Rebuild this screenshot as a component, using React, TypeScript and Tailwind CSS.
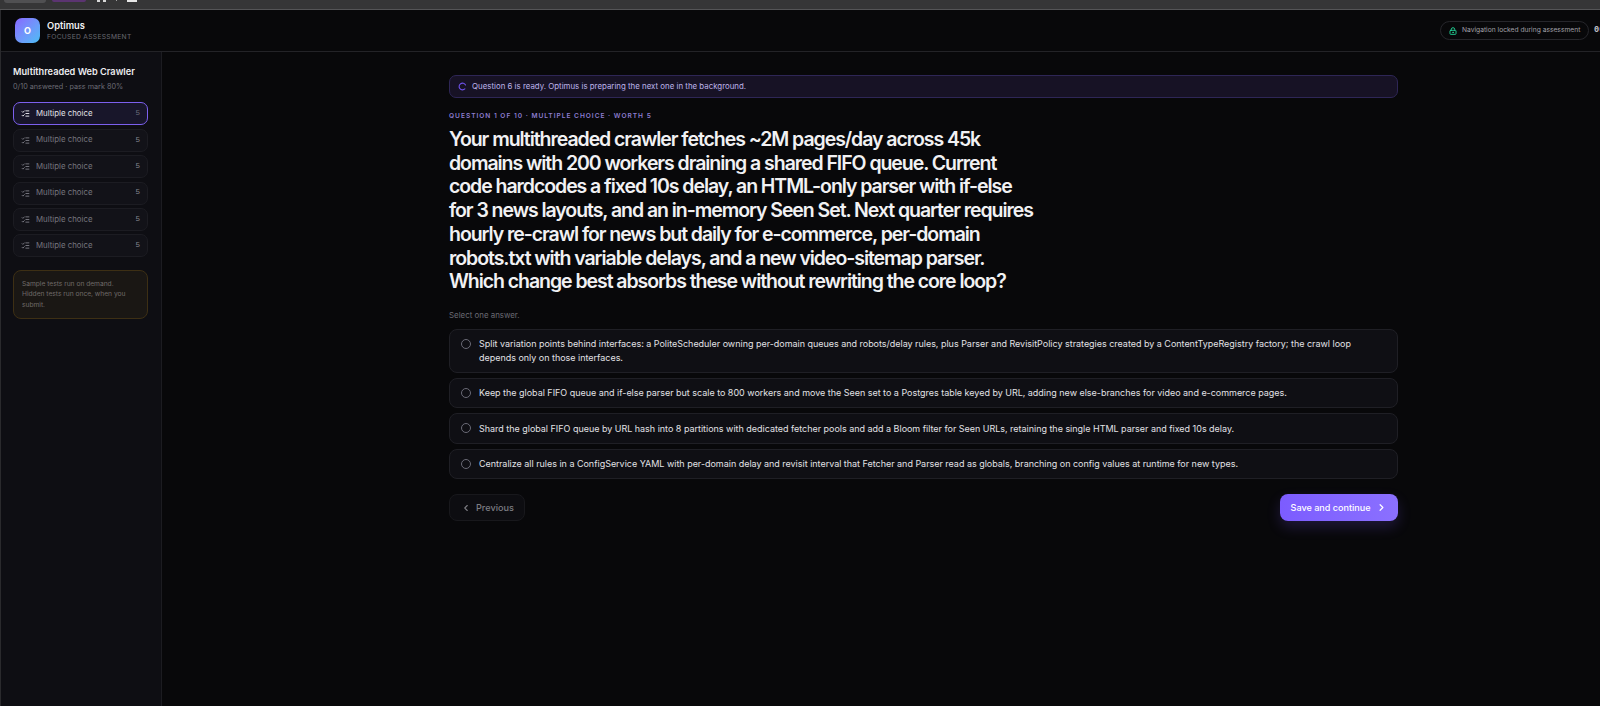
import { ChevronLeft, ChevronRight, ListChecks, LoaderCircle, LockKeyhole } from "lucide-react";

const questions = Array.from({ length: 6 }, (_, i) => ({ id: i + 1, label: "Multiple choice", points: 5 }));

const answers = [
  "Split variation points behind interfaces: a PoliteScheduler owning per-domain queues and robots/delay rules, plus Parser and RevisitPolicy strategies created by a ContentTypeRegistry factory; the crawl loop depends only on those interfaces.",
  "Keep the global FIFO queue and if-else parser but scale to 800 workers and move the Seen set to a Postgres table keyed by URL, adding new else-branches for video and e-commerce pages.",
  "Shard the global FIFO queue by URL hash into 8 partitions with dedicated fetcher pools and add a Bloom filter for Seen URLs, retaining the single HTML parser and fixed 10s delay.",
  "Centralize all rules in a ConfigService YAML with per-domain delay and revisit interval that Fetcher and Parser read as globals, branching on config values at runtime for new types.",
];

const promptLines = [
  "Your multithreaded crawler fetches ~2M pages/day across 45k",
  "domains with 200 workers draining a shared FIFO queue. Current",
  "code hardcodes a fixed 10s delay, an HTML-only parser with if-else",
  "for 3 news layouts, and an in-memory Seen Set. Next quarter requires",
  "hourly re-crawl for news but daily for e-commerce, per-domain",
  "robots.txt with variable delays, and a new video-sitemap parser.",
  "Which change best absorbs these without rewriting the core loop?",
];

function BrowserEdge() {
  return (
    <div className="flex h-[10px] shrink-0 items-start overflow-hidden border-b border-[#555557] bg-[#363637]">
      <span className="ml-1 h-[3px] w-[42px] rounded-b bg-[#505052]" />
      <span className="ml-[6px] h-[2px] w-[34px] rounded-b bg-[#5b3471]" />
      <span className="ml-[11px] h-[2px] w-[3px] bg-[#d8d8d8]" />
      <span className="ml-[3px] h-[2px] w-[3px] bg-[#d8d8d8]" />
      <span className="ml-[10px] h-px w-px bg-[#a0a0a0]" />
      <span className="ml-[10px] h-[2px] w-[10px] bg-[#e6e6e6]" />
    </div>
  );
}

function Header() {
  return (
    <header className="flex h-[42px] shrink-0 items-center border-b border-[#232327] pl-[14px]">
      <span className="flex size-[25px] items-center justify-center rounded-[7px] bg-linear-to-br from-[#8566ff] to-[#45bdf5] text-[9px] font-bold text-white">
        O
      </span>
      <div className="ml-[7px]">
        <p className="text-[9.3px] leading-[12px] font-semibold text-[#f0f0f2]">Optimus</p>
        <p className="text-[6.7px] leading-[10px] tracking-[0.3px] text-[#686871]">FOCUSED ASSESSMENT</p>
      </div>
      <div className="ml-auto flex w-[160px] shrink-0 items-center overflow-hidden">
        <span className="flex h-[19px] w-[149px] shrink-0 items-center rounded-full border border-[#26262b] pl-[8px] text-[6.7px] whitespace-nowrap text-[#a0a0a8]">
          <LockKeyhole size={8} strokeWidth={2.8} className="mr-[5px] shrink-0 text-[#24d095]" />
          Navigation locked during assessment
        </span>
        <span className="ml-[5px] shrink-0 font-['Liberation_Mono',monospace] text-[8.6px] font-bold text-[#c4c4c9]">00</span>
      </div>
    </header>
  );
}

function Sidebar() {
  return (
    <aside className="w-[161px] shrink-0 border-r border-[#1c1c21] bg-[#0e0e13] pt-[13px] pr-[13px] pl-[12px]">
      <h2 className="text-[9.2px] leading-[14px] font-semibold whitespace-nowrap text-[#ececef]">Multithreaded Web Crawler</h2>
      <p className="mt-[2px] text-[7.25px] leading-[11px] text-[#6c6c75]">0/10 answered · pass mark 80%</p>
      <ul className="mt-[10.4px] flex flex-col gap-[3.4px]">
        {questions.map((q) => (
          <li
            key={q.id}
            className={
              q.id === 1
                ? "flex h-[23px] items-center rounded-[7px] border border-[#7c60ee] bg-[#18162a] px-[7px] text-[#e2e2e8]"
                : "flex h-[23px] items-center rounded-[7px] border border-[#1c1c22] bg-[#121218] px-[7px] text-[#75757e]"
            }
          >
            <ListChecks size={9} strokeWidth={2.6} className="shrink-0" />
            <span className="ml-[6px] text-[7.85px]">{q.label}</span>
            <span
              className={
                q.id === 1
                  ? "ml-auto font-['Liberation_Mono',monospace] text-[7.6px] text-[#6a6a78]"
                  : "ml-auto font-['Liberation_Mono',monospace] text-[7.6px] text-[#85858d]"
              }
            >
              {q.points}
            </span>
          </li>
        ))}
      </ul>
      <p className="mt-[12.2px] rounded-[8px] border border-[#3d2f14] bg-[#1a1714] pt-[8px] pr-[14px] pb-[7px] pl-[8px] text-[6.65px] leading-[10.7px] text-[#706b69]">
        Sample tests run on demand.
        <br />
        Hidden tests run once, when you submit.
      </p>
    </aside>
  );
}

export default function App() {
  return (
    <div className="flex h-[706px] w-[1600px] flex-col overflow-hidden bg-[#08080a] font-[Inter,sans-serif]">
      <BrowserEdge />
      <div className="flex grow flex-col border-l border-[#2a2a2d]">
        <Header />
        <div className="flex grow">
          <Sidebar />
          <main className="grow pt-[23px] pl-[287px]">
            <div className="w-[948.6px]">
              <div className="flex h-[23px] items-center rounded-[7px] border border-[#2e2656] bg-[#171225] pl-[8px] text-[7.88px] text-[#bdb2ea]">
                <LoaderCircle size={9} strokeWidth={3} className="mr-[5px] rotate-45 text-[#6d50e8]" />
                Question 6 is ready. Optimus is preparing the next one in the background.
              </div>
              <p className="mt-[13.4px] text-[6.6px] leading-[10px] font-semibold tracking-[0.98px] text-[#8c7dd0]">
                QUESTION 1 OF 10 · MULTIPLE CHOICE · WORTH 5
              </p>
              <h1 className="mt-[6.6px] text-[19.5px] leading-[23.7px] font-semibold tracking-[-1.06px] text-[#f1f1f3]">
                {promptLines.map((line) => (
                  <span key={line} className="block whitespace-nowrap">
                    {line}
                  </span>
                ))}
              </h1>
              <p className="mt-[15.5px] text-[7.9px] leading-[12px] text-[#6a6a73]">Select one answer.</p>
              <div className="mt-[7.5px] flex flex-col gap-[4.9px]">
                {answers.map((answer) => (
                  <label
                    key={answer}
                    className="flex items-start rounded-[8px] border border-[#1f1f25] bg-[#0f0f14] px-[11px] pt-[7.5px] pb-[7.9px] text-[8.965px] leading-[13.2px] text-[#e2e2e6]"
                  >
                    <span className="mt-[1.7px] mr-[8px] size-[10px] shrink-0 rounded-full border border-[#6a6a76]" />
                    <span className="w-[885px]">{answer}</span>
                  </label>
                ))}
              </div>
              <div className="mt-[15.2px] flex justify-between">
                <button className="flex h-[27px] w-[76px] items-center rounded-[8px] border border-[#18181c] bg-[#0d0d11] pl-[11px] text-[9.15px] font-medium text-[#7c7c82]">
                  <ChevronLeft size={10} strokeWidth={2.6} className="mr-[5px]" />
                  Previous
                </button>
                <button className="flex h-[27px] w-[118px] items-center rounded-[8px] bg-linear-to-r from-[#7c5cff] to-[#8b70ff] pl-[11px] text-[9.07px] font-medium text-white shadow-[0_6px_14px_rgba(124,92,255,0.2)]">
                  Save and continue
                  <ChevronRight size={11} strokeWidth={2.6} className="ml-[5px]" />
                </button>
              </div>
            </div>
          </main>
        </div>
      </div>
    </div>
  );
}
